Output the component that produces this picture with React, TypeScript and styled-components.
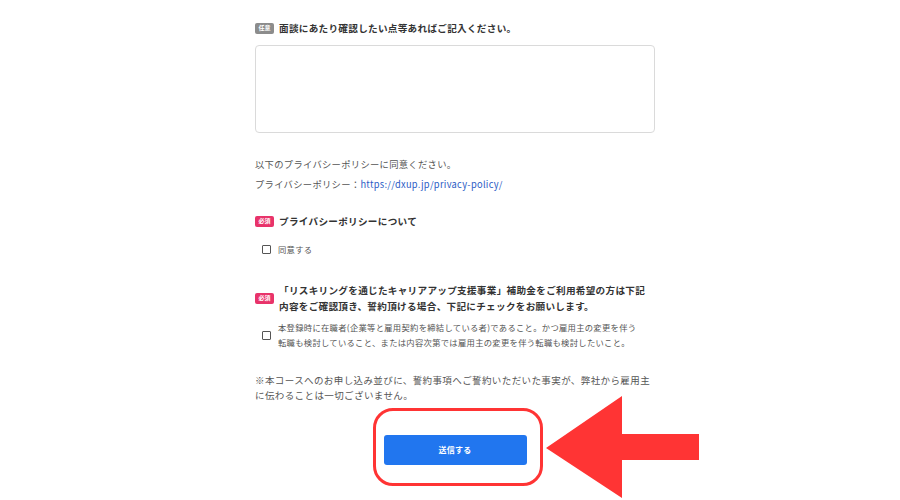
import React from 'react';
import styled, { createGlobalStyle } from 'styled-components';

const GlobalStyle = createGlobalStyle`
  html, body {
    margin: 0;
    padding: 0;
    background: #ffffff;
  }
  body {
    font-family: "Noto Sans CJK JP", "Noto Sans", sans-serif;
    color: #333;
  }
`;

const Page = styled.div`
  width: 900px;
  height: 500px;
  overflow: hidden;
  background: #fff;
`;

const Form = styled.form`
  width: 400px;
  margin-left: 255px;
  padding-top: 21px;
  display: flex;
  flex-direction: column;
`;

const Field = styled.div<{ $gap?: number }>`
  margin-top: ${(p) => p.$gap ?? 0}px;
`;

const LabelRow = styled.div`
  display: flex;
  align-items: center;
  gap: 5px;
`;

const Badge = styled.span<{ $required?: boolean }>`
  flex: none;
  display: inline-flex;
  align-items: center;
  justify-content: center;
  width: 19px;
  height: 11px;
  border-radius: 2px;
  background: ${(p) => (p.$required ? '#e8336a' : '#8c8c8c')};
  color: #fff;
  font-size: 6px;
  font-weight: 700;
  line-height: 1;
`;

const LabelText = styled.span<{ $lh?: number }>`
  font-size: 9.6px;
  font-weight: 700;
  letter-spacing: 0.3px;
  line-height: ${(p) => p.$lh ?? 14}px;
  color: #333;
`;

const TextArea = styled.textarea`
  display: block;
  box-sizing: border-box;
  width: 400px;
  height: 88px;
  margin-top: 10px;
  border: 1px solid #dadada;
  border-radius: 4px;
  resize: none;
  outline: none;
  background: #fff;
`;

const Info = styled.p`
  margin: 0;
  font-size: 9.3px;
  letter-spacing: 0.3px;
  line-height: 20px;
  color: #555;
`;

const Link = styled.a`
  color: #2c5cc5;
  text-decoration: none;
`;

const CheckRow = styled.label`
  display: flex;
  align-items: center;
  gap: 7px;
  padding-left: 7px;
`;

const Box = styled.span`
  flex: none;
  box-sizing: border-box;
  width: 9px;
  height: 9px;
  border: 1.3px solid #555;
  border-radius: 1px;
  background: #fff;
`;

const CheckText = styled.span<{ $lh?: number }>`
  font-size: 8.3px;
  letter-spacing: 0.3px;
  line-height: ${(p) => p.$lh ?? 15}px;
  color: #555;
`;

const Note = styled.p`
  margin: 0;
  font-size: 9.5px;
  letter-spacing: 0.4px;
  line-height: 14.5px;
  color: #555;
`;

const ButtonArea = styled.div`
  display: flex;
  justify-content: center;
  margin-top: 32px;
`;

const ButtonHolder = styled.div`
  position: relative;
  width: 143px;
  height: 30px;
`;

const SubmitButton = styled.button`
  width: 100%;
  height: 100%;
  border: none;
  border-radius: 3px;
  background: #2176ef;
  color: #fff;
  font-family: inherit;
  font-size: 8px;
  font-weight: 700;
  letter-spacing: 0.3px;
  cursor: pointer;
`;

const Ring = styled.div`
  position: absolute;
  left: -11px;
  top: -26px;
  width: 170px;
  height: 78px;
  box-sizing: border-box;
  border: 3px solid #ff3434;
  border-radius: 20px;
  pointer-events: none;
`;

const Arrow = styled.svg`
  position: absolute;
  left: 162px;
  top: -38px;
  pointer-events: none;
`;

export default function App() {
  return (
    <Page>
      <GlobalStyle />
      <Form onSubmit={(e) => e.preventDefault()}>
        <Field>
          <LabelRow>
            <Badge>任意</Badge>
            <LabelText>面談にあたり確認したい点等あればご記入ください。</LabelText>
          </LabelRow>
          <TextArea />
        </Field>

        <Field $gap={21}>
          <Info>以下のプライバシーポリシーに同意ください。</Info>
          <Info>
            プライバシーポリシー：
            <Link href="#">https://dxup.jp/privacy-policy/</Link>
          </Info>
        </Field>

        <Field $gap={20}>
          <LabelRow>
            <Badge $required>必須</Badge>
            <LabelText>プライバシーポリシーについて</LabelText>
          </LabelRow>
        </Field>

        <Field $gap={14}>
          <CheckRow>
            <Box />
            <CheckText>同意する</CheckText>
          </CheckRow>
        </Field>

        <Field $gap={25}>
          <LabelRow>
            <Badge $required>必須</Badge>
            <LabelText $lh={16}>
              「リスキリングを通じたキャリアアップ支援事業」補助金をご利用希望の方は下記
              <br />
              内容をご確認頂き、誓約頂ける場合、下記にチェックをお願いします。
            </LabelText>
          </LabelRow>
        </Field>

        <Field $gap={6}>
          <CheckRow>
            <Box />
            <CheckText $lh={15}>
              本登録時に在職者(企業等と雇用契約を締結している者)であること。かつ雇用主の変更を伴う
              <br />
              転職も検討していること、または内容次第では雇用主の変更を伴う転職も検討したいこと。
            </CheckText>
          </CheckRow>
        </Field>

        <Field $gap={23}>
          <Note>
            ※本コースへのお申し込み並びに、誓約事項へご誓約いただいた事実が、弊社から雇用主に伝わることは一切ございません。
          </Note>
        </Field>

        <ButtonArea>
          <ButtonHolder>
            <SubmitButton type="submit">送信する</SubmitButton>
            <Ring />
            <Arrow width="153" height="102" viewBox="0 0 153 102">
              <polygon
                points="0,52 76,0 76,38 153,38 153,64 76,64 76,102"
                fill="#ff3434"
              />
            </Arrow>
          </ButtonHolder>
        </ButtonArea>
      </Form>
    </Page>
  );
}
